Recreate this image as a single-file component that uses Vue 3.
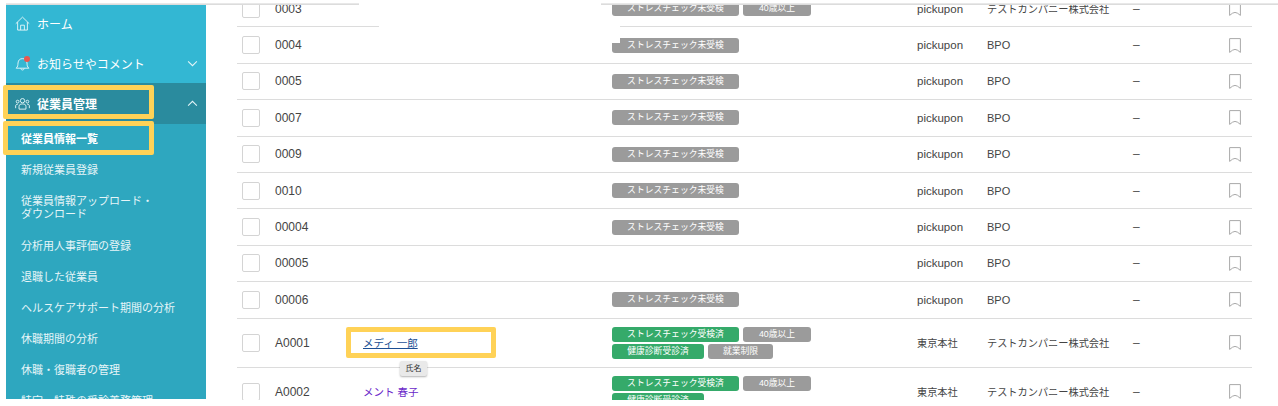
<template>
  <div class="page">
    <aside class="side">
      <div class="nav-top">
        <div class="nav-item">
          <svg class="ico" viewBox="0 0 16 16"><path d="M.8 8.200 8 1.200 15.200 8.200M2.800 6.500V15H13.200V6.500M6 15V9.800H10V15" /></svg>
          ホーム
        </div>
        <div class="nav-item">
          <span class="bell">
            <svg class="ico" viewBox="0 0 16 16"><path d="M1.200 13C3.200 11.500 3 9.500 3.200 7.500 3.500 4.300 5.300 2.800 8 2.800s4.500 1.500 4.800 4.700C13 9.500 12.800 11.500 14.800 13ZM6.200 13.200C6.400 15.500 9.600 15.500 9.800 13.200" /></svg>
            <i class="dot"></i>
          </span>
          お知らせやコメント
          <svg class="chev" viewBox="0 0 12 8"><path d="M1 1.500 6 6.500 11 1.500" /></svg>
        </div>
      </div>
      <div class="nav-open">
        <div class="nav-item open-head">
          <svg class="ico" viewBox="0 0 16 16"><circle cx="8" cy="5" r="2.300" /><circle cx="2.800" cy="6" r="1.500" /><circle cx="13.200" cy="6" r="1.500" /><path d="M4.300 14V11C4.300 9 6 8.500 8 8.500s3.700.5 3.700 2.500v3ZM.7 13V10.500C.7 9.300 1.700 8.800 3 8.800M15.300 13V10.500C15.300 9.300 14.300 8.800 13 8.800" /></svg>
          従業員管理
          <svg class="chev" viewBox="0 0 12 8"><path d="M1 6.500 6 1.500 11 6.500" /></svg>
        </div>
        <ul class="sub">
          <li v-for="(s, i) in subItems" :key="s" :class="{ cur: i === 0 }">{{ s }}</li>
        </ul>
      </div>
    </aside>
    <div class="mark mark-a"></div>
    <div class="mark mark-b"></div>

    <main class="main">
      <div class="rows">
        <div class="row" v-for="r in rows" :key="r.code" :style="{ height: r.h + 'px' }">
          <span class="check"></span>
          <span class="code">{{ r.code }}</span>
          <span class="name">
            <a v-if="r.name" :class="r.cls">{{ r.name }}</a>
          </span>
          <span class="tags">
            <span v-for="t in r.tags" :key="t.text" class="tag" :class="t.cls">{{ t.text }}</span>
          </span>
          <span class="office" :class="{ cjk: r.office !== 'pickupon' }">{{ r.office }}</span>
          <span class="company" :class="{ cjk: r.company !== 'BPO' }">{{ r.company }}</span>
          <span class="dash">–</span>
          <svg class="mark-ico" viewBox="0 0 12 15"><path d="M.6.6H11.400V14.400L8.500 12.200 6 11.400 3.500 12.200.6 14.400Z" /></svg>
        </div>
      </div>
      <div class="name-box"></div>
      <div class="tip">氏名</div>
      <div class="mask mask-a"></div>
      <div class="mask mask-b"></div>
    </main>
    <div class="top-line left"></div>
    <div class="top-line right"></div>
  </div>
</template>

<script setup>
const subItems = [
  '従業員情報一覧',
  '新規従業員登録',
  '従業員情報アップロード・\nダウンロード',
  '分析用人事評価の登録',
  '退職した従業員',
  'ヘルスケアサポート期間の分析',
  '休職期間の分析',
  '休職・復職者の管理',
  '特定・特殊の受診義務管理'
]

const stress = { text: 'ストレスチェック未受検', cls: 'gray wide' }
const done = { text: 'ストレスチェック受検済', cls: 'green wide' }
const age = { text: '40歳以上', cls: 'gray age' }
const health = { text: '健康診断受診済', cls: 'green mid' }
const limit = { text: '就業制限', cls: 'gray lim' }

function plain(code, tags = [stress]) {
  return { code, tags, office: 'pickupon', company: 'BPO', h: 36.4 }
}

const rows = [
  { code: '0003', tags: [stress, age], office: 'pickupon', company: 'テストカンパニー株式会社', h: 36.4 },
  plain('0004'),
  plain('0005'),
  plain('0007'),
  plain('0009'),
  plain('0010'),
  plain('00004'),
  plain('00005', []),
  plain('00006'),
  { code: 'A0001', name: 'メディ 一郎', cls: 'link', tags: [done, age, health, limit], office: '東京本社', company: 'テストカンパニー株式会社', h: 49 },
  { code: 'A0002', name: 'メント 春子', cls: 'visited', tags: [done, age, health], office: '東京本社', company: 'テストカンパニー株式会社', h: 49 }
]
</script>

<style>
html, body { margin: 0; background: #fff; overflow: hidden; }
</style>

<style scoped>
.page {
  position: relative;
  display: flex;
  width: 1278px;
  height: 406px;
  overflow: hidden;
  font-family: "Liberation Sans", "Noto Sans CJK JP", sans-serif;
  color: #333;
}
.side {
  flex: none;
  width: 200px;
  height: 395px;
  margin: 4px 0 0 6px;
  overflow: hidden;
  background: #2ea7bf;
  color: #fff;
  font-size: 12px;
}
.nav-top { height: 79px; background: #33b7d3; }
.nav-item {
  display: flex;
  align-items: center;
  gap: 7px;
  height: 39.500px;
  padding-left: 9px;
}
.open-head { height: 41px; background: #2a8b9e; font-weight: 700; }
.ico { flex: none; width: 15px; height: 15px; fill: none; stroke: #e2f5f8; stroke-width: 1; }
.bell { position: relative; display: flex; }
.dot { position: absolute; top: 0; right: 0; width: 6px; height: 6px; border-radius: 50%; background: #e8584f; }
.chev { width: 11px; height: 7px; margin: 0 8px 0 auto; fill: none; stroke: #e4f5f8; stroke-width: 1.200; }
.sub { margin: 0; padding: 0 0 0 15px; list-style: none; font-size: 11px; line-height: 13px; color: #e6f5f8; }
.sub li { padding: 9px 0; white-space: pre-line; }
.sub li:nth-child(3) { padding-bottom: 10px; }
.sub li.cur { color: #fff; font-weight: 700; }
.mark { position: absolute; left: 3px; box-sizing: border-box; width: 151px; border: 5px solid #ffd257; border-radius: 2px; }
.mark-a { top: 85px; height: 34px; }
.mark-b { top: 121px; height: 34px; }

.main { position: relative; flex: none; width: 1015px; height: 396px; margin: 4px 0 0 31px; overflow: hidden; font-size: 11px; }
.rows { margin-top: -13px; }
.row {
  display: flex;
  align-items: center;
  box-sizing: border-box;
  border-bottom: 1px solid #dcdcdc;
}
.check { flex: none; box-sizing: border-box; width: 18px; height: 18px; margin: 0 15px 0 5px; border: 1px solid #d4d4d4; border-radius: 2px; background: #fff; }
.code { flex: none; width: 88px; font-size: 12px; color: #444; }
.name { flex: none; width: 249px; font-size: 10.500px; }
.link { color: #1c4f93; text-decoration: underline; }
.visited { color: #6a1fc9; }
.tags { flex: none; display: flex; flex-wrap: wrap; gap: 2px 4px; box-sizing: border-box; width: 305px; padding-right: 100px; align-content: center; }
.tag { box-sizing: border-box; height: 15px; border-radius: 3px; color: #fff; font-size: 8.800px; line-height: 15px; text-align: center; }
.gray { background: #9b9b9b; }
.green { background: #35aa6a; }
.wide { width: 127px; }
.age { width: 68px; }
.mid { width: 92px; }
.lim { width: 65px; }
.office { flex: none; width: 70px; font-size: 11.500px; color: #444; }
.company { flex: none; width: 146px; font-size: 11px; color: #444; }
.cjk { font-size: 10.200px; }
.dash { flex: none; width: 96px; font-size: 12px; color: #555; }
.mark-ico { flex: none; width: 12px; height: 15px; fill: none; stroke: #a9a9a9; stroke-width: 1; }
.name-box { position: absolute; top: 323px; left: 109px; box-sizing: border-box; width: 150px; height: 31px; border: 5px solid #ffd257; border-radius: 2px; }
.tip { position: absolute; top: 357px; left: 163px; width: 27px; height: 15px; border-radius: 2px; background: #e9e9e9; box-shadow: 0 1px 2px rgba(0, 0, 0, .3); font-size: 8px; line-height: 15px; text-align: center; color: #333; }
.mask { position: absolute; background: #fff; }
.mask-a { top: 0; left: 122px; width: 242px; height: 13px; }
.mask-b { top: 13px; left: 142px; width: 241px; height: 26px; }
.top-line { position: absolute; top: 3px; height: 2px; background: linear-gradient(#eee, #d6d6d6); }
.top-line.left { left: 6px; width: 353px; }
.top-line.right { left: 601px; right: 0; }
</style>
